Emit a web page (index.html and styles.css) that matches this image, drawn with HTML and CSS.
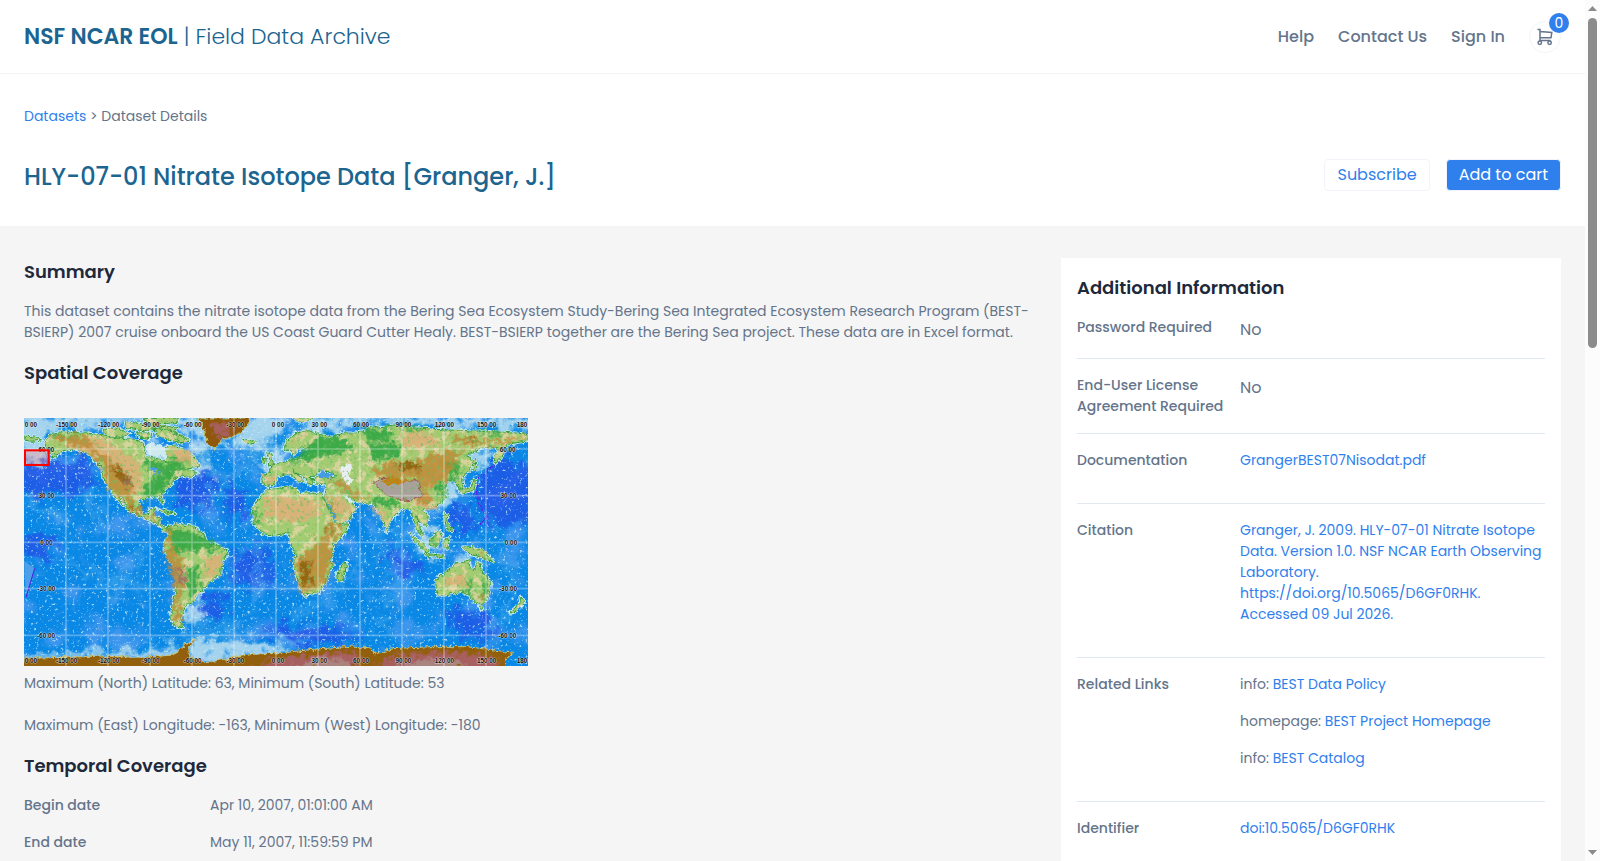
FILE: index.html
```html
<!DOCTYPE html>
<html lang="en">
<head>
<meta charset="utf-8">
<meta name="viewport" content="width=device-width, initial-scale=1">
<title>HLY-07-01 Nitrate Isotope Data [Granger, J.]</title>
<link rel="stylesheet" href="styles.css">
</head>
<body>
<header class="site-header">
  <a class="brand" href="#"><strong>NSF NCAR EOL</strong> | Field Data Archive</a>
  <nav class="nav">
    <a href="#">Help</a>
    <a href="#">Contact Us</a>
    <a href="#">Sign In</a>
    <button class="cart" type="button" aria-label="Cart">
      <svg class="cart-icon" viewBox="0 0 18 18" aria-hidden="true"><path d="M1.500 1.500H4V12.500H14.500M4 3.500L15.800 4.400L15 9.800H4"/><circle cx="3.800" cy="14.800" r="1.700"/><circle cx="13.600" cy="14.800" r="1.700"/></svg>
      <span class="badge">0</span>
    </button>
  </nav>
</header>
<section class="title-band">
  <div class="crumbs"><a href="#">Datasets</a> &gt; Dataset Details</div>
  <div class="title-row">
    <h1>HLY-07-01 Nitrate Isotope Data [Granger, J.]</h1>
    <div class="actions">
      <button class="btn btn-outline" type="button">Subscribe</button>
      <button class="btn btn-primary" type="button">Add to cart</button>
    </div>
  </div>
</section>
<main class="content">
  <div class="details">
    <h2>Summary</h2>
    <p>This dataset contains the nitrate isotope data from the Bering Sea Ecosystem Study-Bering Sea Integrated Ecosystem Research Program (BEST-BSIERP) 2007 cruise onboard the US Coast Guard Cutter Healy. BEST-BSIERP together are the Bering Sea project. These data are in Excel format.</p>
    <h2>Spatial Coverage</h2>
    <svg class="map" viewBox="72 54 1512 744" role="img" aria-label="World map of the spatial coverage">
      <defs>
        <filter id="rough" x="-5%" y="-5%" width="110%" height="110%"><feTurbulence type="fractalNoise" baseFrequency="0.08" numOctaves="4" seed="4" result="n"/><feDisplacementMap in="SourceGraphic" in2="n" scale="16" xChannelSelector="R" yChannelSelector="G"/></filter>
        <filter id="relief" x="-20%" y="-20%" width="140%" height="140%"><feGaussianBlur stdDeviation="5" result="b"/><feTurbulence type="fractalNoise" baseFrequency="0.06" numOctaves="5" seed="9" result="n"/><feDisplacementMap in="b" in2="n" scale="50" xChannelSelector="R" yChannelSelector="G"/></filter>
        <filter id="soft" x="-20%" y="-20%" width="140%" height="140%"><feGaussianBlur stdDeviation="9" result="b"/><feTurbulence type="fractalNoise" baseFrequency="0.03" numOctaves="6" seed="3" result="n"/><feDisplacementMap in="b" in2="n" scale="90" xChannelSelector="R" yChannelSelector="G"/></filter>
        <filter id="specks" x="0" y="0" width="100%" height="100%"><feTurbulence type="fractalNoise" baseFrequency="0.12" numOctaves="4" seed="12"/><feColorMatrix values="0 0 0 0 .6  0 0 0 0 .85  0 0 0 0 .97  5 0 0 0 -3.100"/></filter>
        <filter id="basins" x="0" y="0" width="100%" height="100%"><feTurbulence type="fractalNoise" baseFrequency="0.012" numOctaves="6" seed="5"/><feColorMatrix values="0 0 0 0 .12  0 0 0 0 .35  0 0 0 0 .9  4 0 0 0 -2"/></filter>
        <filter id="hills" x="-5%" y="-5%" width="110%" height="110%"><feTurbulence type="fractalNoise" baseFrequency="0.04" numOctaves="5" seed="21"/><feColorMatrix values="0 0 0 0 .85  0 0 0 0 .68  0 0 0 0 .42  7 0 0 0 -3.500"/><feComposite operator="in" in2="SourceGraphic"/></filter>
        <filter id="woods" x="-5%" y="-5%" width="110%" height="110%"><feTurbulence type="fractalNoise" baseFrequency="0.1" numOctaves="4" seed="31"/><feColorMatrix values="0 0 0 0 .15  0 0 0 0 .5  0 0 0 0 .12  8 0 0 0 -4.800"/><feComposite operator="in" in2="SourceGraphic"/></filter>
        <clipPath id="frame"><rect x="72" y="54" width="1512" height="744"/></clipPath>
        <g id="land">
          <path d="M148 160L133 130L150 105L190 96L270 100L330 112L400 118L430 130L432 150L440 170L480 178L495 188L500 165L495 140L530 138L565 160L590 180L600 198L560 205L590 215L575 232L545 225L520 240L510 260L495 270L482 280L490 315L476 290L440 290L415 300L418 325L428 345L445 340L455 322L465 325L458 345L475 352L480 375L500 385L510 378L495 397L470 370L430 352L390 334L368 298L352 282L370 317L355 302L330 265L308 230L306 205L270 165L230 145L190 152L152 178L165 158Z"/>
          <path d="M505 380L530 372L575 378L610 400L620 425L680 450L682 462L665 490L662 525L640 535L620 555L600 580L585 590L588 602L560 610L548 640L538 665L550 683L525 677L512 655L520 610L530 560L532 510L510 480L492 450L495 425L505 405Z"/>
          <path d="M310 88L350 84L390 100L370 112L320 110ZM375 65L430 72L450 62L470 88L430 92L380 84ZM460 85L500 82L560 118L545 130L500 116L470 105ZM430 56L540 54L525 68L450 74ZM480 76L535 84L520 92L480 88ZM410 98L455 100L450 116L420 112ZM505 98L550 106L570 124L540 128ZM72 108L110 112L125 120L95 124L72 120Z"/>
          <path d="M728 122L750 118L772 124L755 132L738 130ZM800 158L812 160L820 190L828 194L804 198L810 178ZM786 176L799 174L797 190L784 190ZM880 54L940 54L915 66L890 62Z"/>
          <path d="M790 225L805 222L812 204L830 190L855 186L875 180L905 176L930 158L945 152L920 146L905 140L880 165L872 148L852 148L858 125L890 98L930 92L960 104L1000 112L1030 98L1060 100L1100 94L1110 80L1135 84L1180 78L1240 82L1300 88L1400 92L1480 95L1560 100L1584 108L1584 122L1540 130L1515 138L1508 165L1488 190L1480 170L1500 148L1470 140L1440 145L1400 165L1420 182L1408 210L1385 235L1390 265L1378 268L1366 245L1345 240L1330 248L1340 275L1330 305L1290 325L1265 325L1285 350L1278 378L1255 362L1248 345L1258 380L1270 410L1250 390L1232 328L1205 325L1175 355L1160 390L1145 352L1135 330L1112 310L1078 306L1050 300L1070 325L1045 360L1013 374L1000 345L972 295L978 268L985 252L950 250L935 236L955 232L990 235L1010 230L985 212L960 210L945 228L930 230L940 248L926 256L915 232L900 225L880 215L900 232L912 245L890 242L875 222L855 222L828 230L826 246L805 260L788 250Z"/>
          <path d="M800 270L870 260L890 268L900 282L925 278L965 282L975 305L990 332L1010 372L1046 372L1038 395L1000 435L992 470L997 500L985 522L975 550L955 578L912 586L900 560L882 505L888 460L870 430L867 398L830 405L790 402L762 372L757 325L785 285Z"/>
          <path d="M1036 486L1040 500L1027 542L1015 545L1012 515ZM1308 545L1320 527L1350 510L1365 492L1385 488L1408 482L1408 500L1425 508L1432 482L1445 510L1472 550L1465 592L1445 612L1425 606L1408 586L1385 574L1350 582L1315 588L1308 560ZM1438 618L1450 620L1444 630ZM1560 588L1576 605L1558 622L1535 642L1530 636L1562 610Z"/>
          <path d="M1288 420L1300 412L1316 390L1326 403L1312 440L1292 436ZM1228 400L1242 410L1285 448L1280 458L1260 440ZM1272 460L1330 466L1332 474L1280 468ZM1332 420L1348 412L1340 445L1332 440ZM1334 340L1344 345L1340 365L1355 392L1345 390L1332 360ZM1385 440L1410 442L1450 450L1480 484L1450 474L1410 462ZM1378 272L1412 262L1422 240L1430 238L1422 270L1384 280ZM1420 178L1426 180L1428 212L1420 208ZM1156 384L1164 386L1162 398L1155 394ZM472 326L510 336L525 340L500 342Z"/>
        </g>
      </defs>
      <g clip-path="url(#frame)">
        <rect x="72" y="54" width="1512" height="744" fill="#0a88e5"/>
        <rect x="72" y="54" width="1512" height="744" filter="url(#basins)" opacity=".6"/>
        <g filter="url(#soft)">
          <path class="deep" d="M72 190L250 170L300 260L200 285L72 290ZM510 230L640 200L650 340L570 325L515 290ZM680 230L740 290L730 360L680 350ZM700 460L800 430L820 570L700 540ZM590 600L670 590L690 640L600 650ZM1430 240L1510 170L1600 200L1600 370L1460 375L1435 310ZM1340 310L1410 315L1430 400L1370 400ZM1130 430L1250 480L1280 520L1200 530ZM1330 620L1450 640L1510 700L1390 720ZM60 400L170 420L140 490L60 470ZM780 680L1000 680L1080 710L900 740Z"/>
          <path class="shelf" d="M60 40L880 40L840 100L760 160L690 150L720 95L600 170L570 100L420 60L60 110ZM60 100L150 100L150 165L125 185L60 182ZM430 130L500 145L495 185L450 175ZM600 170L650 205L605 225L580 215ZM930 40L1600 40V90L1100 70L940 105L860 130ZM780 145L860 140L850 195L790 215ZM555 610L610 590L580 680L560 690ZM1320 235L1375 240L1370 290L1320 325L1290 335ZM1380 475L1430 450L1450 510L1360 500ZM1390 150L1500 145L1440 215L1420 200ZM1250 360L1300 400L1330 460L1270 460L1240 400ZM560 725L630 710L860 735L850 765L580 790ZM60 765L540 745V780H60Z"/>
          <path class="ridge" d="M640 350Q610 270 700 230T735 130M745 430Q790 480 770 560T760 640M1105 590Q1210 620 1195 540T1200 340M870 640Q1000 610 1040 540L1090 470M200 490Q310 550 470 560M330 620Q380 500 450 430M1100 640L1190 710M550 680L700 680Q750 700 680 705M1490 450L1540 510L1530 620L1490 690M130 340L180 330M72 300L210 370M250 250L320 400M1135 330L1140 500"/>
        </g>
        <rect x="72" y="54" width="1512" height="744" filter="url(#specks)" opacity=".8"/>
        <path d="M72 482L104 505L78 592" fill="#4c9fe8"/><path d="M104 505L78 592" stroke="#5a1be0" stroke-width="3" fill="none"/><path d="M1510 168L1430 240L1435 310L1460 350L1440 375M1355 380L1365 400" stroke="#5a1be0" stroke-width="3" fill="none" filter="url(#rough)"/>
        <use href="#land" class="coast" filter="url(#rough)"/>
        <use href="#land" class="ground" filter="url(#rough)"/>
        <use href="#land" filter="url(#hills)" opacity=".7"/>
        <g filter="url(#relief)">
          <path class="forest" d="M150 105L240 104L230 115L160 118ZM435 180L490 190L560 165L580 185L520 215L500 255L480 285L425 290L430 265L480 220L440 205ZM510 385L560 390L610 405L665 450L600 445L540 460L505 450ZM565 500L595 500L600 560L570 600L560 550ZM760 320L775 330L778 375L790 385L765 370ZM1080 85L1140 86L1180 88L1170 120L1110 125ZM1180 78L1280 85L1250 98ZM1420 92L1500 98L1490 110ZM1310 250L1335 250L1335 300L1310 290ZM960 105L1030 115L1060 150L960 175L890 185L860 200ZM1100 130L1200 130L1200 170L1110 180ZM1340 190L1380 180L1370 240L1335 235ZM1110 290L1170 295L1205 305L1190 320L1130 315ZM1400 540L1420 550L1415 590L1395 570ZM1450 530L1462 550L1455 600L1435 600ZM1005 262L1030 275L1040 295L1070 303L1045 285ZM1285 420L1310 410L1305 440ZM970 520L985 520L970 550Z"/>
          <path class="tan" d="M500 155L560 145L590 185L540 190ZM160 118L260 112L330 125L420 190L420 270L390 290L350 200L280 170L200 135ZM800 290L950 300L960 350L880 365L790 350ZM610 480L670 460L655 520L620 540ZM995 290L1030 300L1060 330L1015 355ZM1110 320L1150 330L1165 380L1145 355ZM1205 100L1300 100L1320 140L1210 145ZM1330 540L1390 520L1400 560L1340 560ZM1230 300L1280 280L1310 310L1270 330ZM795 230L822 228L818 250L795 248ZM860 150L890 110L925 96L885 125Z"/>
          <path class="brown" d="M160 110L260 108L300 160L330 170L390 235L400 300L425 345L390 332L365 290L325 265L310 210L280 160L230 132L170 128ZM885 480L930 450L960 410L995 405L995 440L985 520L960 560L910 580L890 540ZM975 365L1020 380L1000 420L980 390ZM1110 210L1180 185L1260 180L1330 150L1370 165L1330 230L1300 260L1260 270L1250 230L1180 240L1130 230ZM1350 105L1420 115L1480 120L1560 112L1584 115L1510 130L1400 135L1360 125ZM985 240L1030 240L1070 280L1110 295L1070 300L1020 260ZM1240 275L1290 270L1300 310L1260 310ZM500 400L520 385L510 430L550 490L555 550L535 600L545 670L520 660L528 560L500 470ZM975 285L990 290L1010 340L1000 345ZM430 340L465 355L480 375L455 362ZM1425 445L1460 460L1450 465ZM1440 575L1460 590L1445 605ZM1270 230L1330 200L1350 150L1390 145L1330 250Z"/>
          <path class="dark" d="M325 195L385 215L400 265L380 262L345 225ZM395 300L415 335L395 325ZM1180 190L1250 185L1270 215L1210 210ZM900 490L930 480L935 550L910 560ZM985 370L995 400L985 410ZM1390 118L1430 120L1420 130Z"/>
          <path d="M536 495L556 515L550 560L538 540ZM365 235L385 240L390 260L375 255Z" fill="#9c6f63"/>
        </g>
        <g filter="url(#rough)">
          <path d="M1120 248L1140 236L1175 234L1210 246L1255 240L1268 290L1230 302L1190 298L1160 285L1135 265Z" fill="#aaa09c" stroke="#9b5c52" stroke-width="3"/>
          <path d="M1145 242L1175 230L1210 240L1250 238L1210 250L1165 256Z" fill="#bd8315"/>
          <path d="M1020 200L1050 192L1060 205L1045 225L1060 240L1050 256L1030 245L1025 220Z" fill="#e9eef0"/>
          <path d="M948 226L965 214L1000 222L990 233L960 234ZM975 290L1012 366L1018 374L1000 355Z" fill="#459ce4"/>
          <path d="M444 205L462 202L474 210L466 212L468 226L460 224L462 212ZM474 214L488 212L478 220Z" fill="#459ce4"/>
          <path d="M435 140L460 128L500 142L498 180L482 170L445 165Z" class="bay"/>
          <path d="M1030 285L1045 290L1065 308L1045 305Z" class="bay"/>
          <path d="M595 54H750L742 78L705 108L665 118L644 148L622 130L610 88Z" fill="#8f5807" stroke="#b9c26a" stroke-width="3"/>
          <path d="M60 775L200 772L300 768L430 772L520 765L545 740L590 715L565 745L570 772L620 788L700 772L760 763L860 757L940 748L1060 738L1112 744L1125 762L1180 746L1290 740L1400 740L1480 750L1540 760L1515 778L1520 810H60Z" fill="#92600b" stroke="#c9c77c" stroke-width="3"/>
        </g>
        <use href="#land" filter="url(#woods)" opacity=".6"/>
        <g filter="url(#relief)"><path d="M635 75L665 65L700 80L690 105L655 112L640 100ZM730 810L840 776L930 765L1060 755L1090 775L1060 810ZM1110 810L1180 768L1300 755L1400 760L1500 780L1480 810Z" fill="#a85f60"/><path d="M850 810L960 775L1050 785L1050 810ZM1180 810L1260 780L1360 780L1420 810Z" fill="#aa8580"/></g>
        <path class="grid" d="M198 54V798M324 54V798M450 54V798M576 54V798M702 54V798M828 54V798M954 54V798M1080 54V798M1206 54V798M1332 54V798M1458 54V798M72 147H1584M72 287H1584M72 427H1584M72 566H1584M72 706H1584"/>
        <g class="ticks">
          <text class="first" x="74" y="82">0 00</text><text x="200" y="82">-150 00</text><text x="326" y="82">-120 00</text><text x="452" y="82">-90 00</text><text x="578" y="82">-60 00</text><text x="706" y="82">-30 00</text><text x="834" y="82">0 00</text><text x="958" y="82">30 00</text><text x="1083" y="82">60 00</text><text x="1210" y="82">90 00</text><text x="1333" y="82">120 00</text><text x="1460" y="82">150 00</text><text class="last" x="1582" y="82">180</text>
          <text class="first" x="74" y="788">0 00</text><text x="200" y="788">-150 00</text><text x="326" y="788">-120 00</text><text x="452" y="788">-90 00</text><text x="578" y="788">-60 00</text><text x="706" y="788">-30 00</text><text x="834" y="788">0 00</text><text x="958" y="788">30 00</text><text x="1083" y="788">60 00</text><text x="1210" y="788">90 00</text><text x="1333" y="788">120 00</text><text x="1460" y="788">150 00</text><text class="last" x="1582" y="788">180</text>
          <text x="139" y="155">60 00</text><text x="139" y="295">30 00</text><text x="139" y="434">0 00</text><text x="139" y="574">-30 00</text><text x="138" y="713">-60 00</text>
          <text x="1523" y="155">60 00</text><text x="1525" y="295">30 00</text><text x="1533" y="434">0 00</text><text x="1524" y="574">-30 00</text><text x="1522" y="713">-60 00</text>
        </g>
        <rect class="extent" x="75" y="151" width="71" height="44"/>
      </g>
    </svg>
    <p class="bounds">Maximum (North) Latitude: 63, Minimum (South) Latitude: 53</p>
    <p class="bounds">Maximum (East) Longitude: -163, Minimum (West) Longitude: -180</p>
    <h2>Temporal Coverage</h2>
    <dl class="dates">
      <dt>Begin date</dt><dd>Apr 10, 2007, 01:01:00 AM</dd>
      <dt>End date</dt><dd>May 11, 2007, 11:59:59 PM</dd>
    </dl>
  </div>
  <aside class="info">
    <h2>Additional Information</h2>
    <dl>
      <div class="row"><dt>Password Required</dt><dd class="flag">No</dd></div>
      <div class="row"><dt>End-User License Agreement Required</dt><dd class="flag">No</dd></div>
      <div class="row"><dt>Documentation</dt><dd><p><a href="#">GrangerBEST07Nisodat.pdf</a></p></dd></div>
      <div class="row"><dt>Citation</dt><dd><p><a href="#">Granger, J. 2009. HLY-07-01 Nitrate Isotope Data. Version 1.0. NSF NCAR Earth Observing Laboratory. https://doi.org/10.5065/D6GF0RHK. Accessed 09 Jul 2026.</a></p></dd></div>
      <div class="row"><dt>Related Links</dt><dd><p>info: <a href="#">BEST Data Policy</a></p><p>homepage: <a href="#">BEST Project Homepage</a></p><p>info: <a href="#">BEST Catalog</a></p></dd></div>
      <div class="row"><dt>Identifier</dt><dd><p><a href="#">doi:10.5065/D6GF0RHK</a></p></dd></div>
    </dl>
  </aside>
</main>
<div class="scrollbar" aria-hidden="true">
  <svg class="arrow" viewBox="0 0 9 5"><path d="M0 5L4.500 0L9 5Z"/></svg>
  <div class="track"><div class="thumb"></div></div>
  <svg class="arrow" viewBox="0 0 9 5"><path d="M0 0L4.500 5L9 0Z"/></svg>
</div>
</body>
</html>
```
FILE: styles.css
```css
* { box-sizing: border-box; }
html { height: 100%; overflow: hidden; }
body { margin: 0; height: 100%; overflow: hidden; padding-right: 15px; background: #f5f5f5; color: #64748b; font: 14px/21px Poppins, Inter, sans-serif; }
a { color: #2f80ed; text-decoration: none; }
h1, h2, p, dl, dd { margin: 0; }
button { font: inherit; cursor: pointer; }

.site-header { display: flex; align-items: center; justify-content: space-between; padding: 20px 24px; background: #fff; border-bottom: 1px solid #f1f2f4; }
.brand { font-size: 22px; line-height: 33px; font-weight: 300; color: #1b6590; }
.brand strong { font-weight: 600; }
.nav { display: flex; align-items: center; gap: 24px; font-size: 16px; line-height: 24px; font-weight: 500; }
.nav a { color: #64748b; }
.cart { position: relative; display: grid; place-items: center; width: 32px; height: 32px; padding: 0; border: 1px solid #f1f5f9; border-radius: 50%; background: #fff; color: #64748b; }
.cart-icon { width: 18px; height: 18px; fill: none; stroke: currentColor; stroke-width: 1.5; }
.badge { position: absolute; top: -9px; right: -9px; width: 20px; height: 20px; border-radius: 50%; background: #2f80ed; color: #fff; font-size: 14px; line-height: 20px; font-weight: 400; text-align: center; }

.title-band { padding: 32px 24px; background: #fff; }
.title-row { display: flex; align-items: flex-start; justify-content: space-between; margin-top: 32px; }
h1 { font-size: 24px; line-height: 35px; font-weight: 500; color: #1b6590; }
.actions { display: flex; gap: 16px; }
.btn { height: 32px; padding: 0 12px 2px; border: 1px solid #f1f5f9; border-radius: 4px; font-size: 16px; }
.btn-outline { background: #fff; color: #2f80ed; }
.btn-primary { background: #2f80ed; color: #fff; }

.content { display: grid; grid-template-columns: minmax(0, 1fr) 500px; gap: 24px; padding: 32px 24px; }
h2 { font-size: 18px; line-height: 27px; font-weight: 600; color: #1e293b; }
.details p { margin: 16px 0; }
.map { display: block; width: 504px; max-width: 100%; margin-top: 32px; }
.details .bounds { margin: 7px 0 21px; }
.details .bounds + .bounds { margin-bottom: 16px; }
.dates { display: grid; grid-template-columns: 186px 1fr; row-gap: 16px; margin-top: 16px; }
dt { font-weight: 500; }

.deep { fill: #2450e6; opacity: .75; }
.shelf { fill: #b5dcee; opacity: .9; }
.ridge { fill: none; stroke: #58b4ee; stroke-width: 14; opacity: .6; }
.coast { fill: #d2ecf1; stroke: #c5e8f2; stroke-width: 9; stroke-linejoin: round; }
.ground { fill: #a3cc72; stroke: #2f9838; stroke-width: 3; }
.forest { fill: #2ba33f; opacity: .85; }
.tan { fill: #dbb078; opacity: .9; }
.brown { fill: #bd8a35; opacity: .85; }
.dark { fill: #8b5b09; opacity: .8; }
.bay { fill: #cfeaee; }
.grid { fill: none; stroke: #fff; stroke-width: 5; opacity: .3; }
.ticks { font: bold 19px "Liberation Sans", Arial, sans-serif; text-anchor: middle; fill: #111; stroke: #fff; stroke-opacity: .6; stroke-width: 3; paint-order: stroke; }
.ticks .first { text-anchor: start; }
.ticks .last { text-anchor: end; }
.extent { fill: #f99; fill-opacity: .4; stroke: #f00; stroke-width: 6; }

.info { padding: 16px; background: #fff; }
.row { display: grid; grid-template-columns: 147px minmax(0, 1fr); column-gap: 16px; padding: 16px 0; border-bottom: 1px solid #e2e8f0; }
.row p { margin-bottom: 16px; }
.flag { font-size: 16px; line-height: 25px; }

.scrollbar { position: fixed; top: 0; right: 0; bottom: 0; display: flex; flex-direction: column; align-items: center; width: 15px; padding: 6px 0; background: #fcfcfc; }
.arrow { flex: none; width: 9px; height: 5px; fill: #8b8b8b; }
.track { flex: 1; width: 9px; padding: 7px 0; }
.thumb { height: 40%; border-radius: 5px; background: #8b8b8b; }
```
